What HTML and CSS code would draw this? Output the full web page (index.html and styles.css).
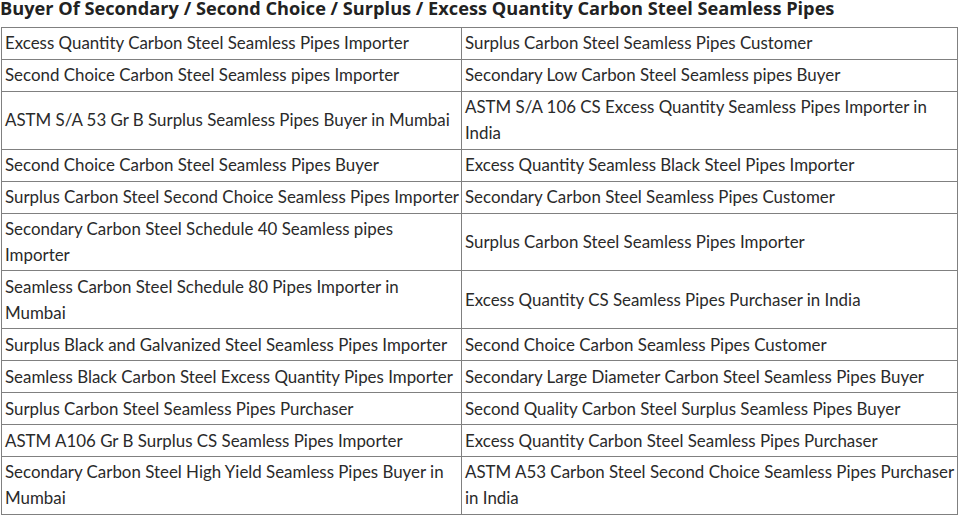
FILE: index.html
```html
<!DOCTYPE html>
<html>
<head>
<meta charset="utf-8">
<link rel="stylesheet" href="styles.css">
</head>
<body>
<h2 class="title">Buyer Of Secondary / Second Choice / Surplus / Excess Quantity Carbon Steel Seamless Pipes</h2>
<table class="grid">
<colgroup><col class="c1"><col class="c2"></colgroup>
<tbody>
<tr><td>Excess Quantity Carbon Steel Seamless Pipes Importer</td><td>Surplus Carbon Steel Seamless Pipes Customer</td></tr>
<tr><td>Second Choice Carbon Steel Seamless pipes Importer</td><td>Secondary Low Carbon Steel Seamless pipes Buyer</td></tr>
<tr><td>ASTM S/A 53 Gr B Surplus Seamless Pipes Buyer in Mumbai</td><td>ASTM S/A 106 CS Excess Quantity Seamless Pipes Importer in India</td></tr>
<tr><td>Second Choice Carbon Steel Seamless Pipes Buyer</td><td>Excess Quantity Seamless Black Steel Pipes Importer</td></tr>
<tr><td>Surplus Carbon Steel Second Choice Seamless Pipes Importer</td><td>Secondary Carbon Steel Seamless Pipes Customer</td></tr>
<tr><td>Secondary Carbon Steel Schedule 40 Seamless pipes Importer</td><td>Surplus Carbon Steel Seamless Pipes Importer</td></tr>
<tr><td>Seamless Carbon Steel Schedule 80 Pipes Importer in Mumbai</td><td>Excess Quantity CS Seamless Pipes Purchaser in India</td></tr>
<tr><td>Surplus Black and Galvanized Steel Seamless Pipes Importer</td><td>Second Choice Carbon Seamless Pipes Customer</td></tr>
<tr><td>Seamless Black Carbon Steel Excess Quantity Pipes Importer</td><td>Secondary Large Diameter Carbon Steel Seamless Pipes Buyer</td></tr>
<tr><td>Surplus Carbon Steel Seamless Pipes Purchaser</td><td>Second Quality Carbon Steel Surplus Seamless Pipes Buyer</td></tr>
<tr><td>ASTM A106 Gr B Surplus CS Seamless Pipes Importer</td><td>Excess Quantity Carbon Steel Seamless Pipes Purchaser</td></tr>
<tr><td>Secondary Carbon Steel High Yield Seamless Pipes Buyer in Mumbai</td><td>ASTM A53 Carbon Steel Second Choice Seamless Pipes Purchaser in India</td></tr>
</tbody>
</table>
</body>
</html>
```

FILE: styles.css
```css
html, body {
  margin: 0;
  padding: 0;
  background: #ffffff;
}
body {
  padding-left: 1px;
}
.title {
  margin: -1px 0 0 -1px;
  font-family: "Open Sans", "Liberation Sans", sans-serif;
  font-weight: 700;
  font-size: 18.2px;
  line-height: 18px;
  color: #222222;
  height: 28px;
}
.grid {
  border-collapse: collapse;
  width: 957px;
  table-layout: fixed;
  font-family: Lato, "Liberation Sans", sans-serif;
  font-size: 16.9px;
  line-height: 26px;
  color: #2a2a2a;
}
.c1 { width: 460px; }
.grid td {
  border: 1px solid #808080;
  padding: 2.46px 1px 2.46px 3px;
  vertical-align: middle;
  text-align: left;
}
```
